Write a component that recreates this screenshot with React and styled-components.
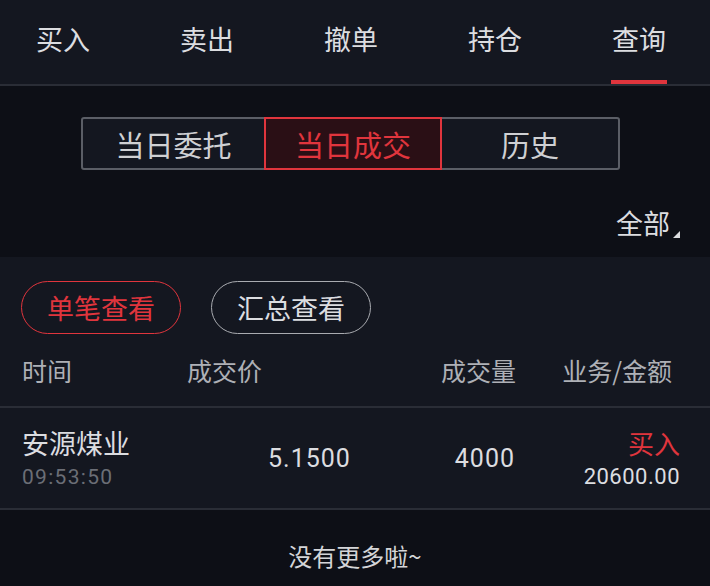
import React, { useState } from 'react';
import styled, { createGlobalStyle } from 'styled-components';

const Color = {
  panel: '#141720',
  deep: '#0d0f16',
  line: '#2a2d36',
  text: '#dcdde0',
  sub: '#aeb0b6',
  muted: '#6b6e76',
  red: '#e0353d',
  redBg: '#2a0f15',
};

const Global = createGlobalStyle`
  html, body {
    margin: 0;
    padding: 0;
    background: ${Color.deep};
  }
  body {
    font-family: "Noto Sans CJK SC", "Noto Sans", sans-serif;
    color: ${Color.text};
  }
`;

const tabs = ['买入', '卖出', '撤单', '持仓', '查询'];
const segments = ['当日委托', '当日成交', '历史'];
const pills = ['单笔查看', '汇总查看'];

export default function App() {
  const [tab, setTab] = useState(4);
  const [seg, setSeg] = useState(1);
  const [pill, setPill] = useState(0);

  return (
    <Page>
      <Global />
      <TabBar>
        {tabs.map((t, i) => (
          <Tab key={t} $active={i === tab} onClick={() => setTab(i)}>
            {t}
          </Tab>
        ))}
      </TabBar>

      <FilterArea>
        <Segmented>
          {segments.map((s, i) => (
            <Segment key={s} $active={i === seg} onClick={() => setSeg(i)}>
              {s}
            </Segment>
          ))}
        </Segmented>
        <AllRow>
          <AllButton>全部</AllButton>
        </AllRow>
      </FilterArea>

      <ListPanel>
        <PillRow>
          {pills.map((p, i) => (
            <Pill key={p} $active={i === pill} onClick={() => setPill(i)}>
              {p}
            </Pill>
          ))}
        </PillRow>
        <HeadRow>
          <HeadCell>时间</HeadCell>
          <HeadCell>成交价</HeadCell>
          <HeadCell $right>成交量</HeadCell>
          <HeadCell $right>业务/金额</HeadCell>
        </HeadRow>
      </ListPanel>

      <DealRow>
        <NameCol>
          <StockName>安源煤业</StockName>
          <Time>09:53:50</Time>
        </NameCol>
        <Num $pad="81px">5.1500</Num>
        <Num $right>4000</Num>
        <AmountCol>
          <Side>买入</Side>
          <Amount>20600.00</Amount>
        </AmountCol>
      </DealRow>

      <NoMore>没有更多啦~</NoMore>
    </Page>
  );
}

const Page = styled.div`
  width: 710px;
  min-height: 586px;
  background: ${Color.deep};
`;

const TabBar = styled.div`
  height: 84px;
  display: flex;
  gap: 90px;
  padding-left: 36px;
  background: ${Color.panel};
  border-bottom: 2px solid ${Color.line};
`;

const Tab = styled.div`
  position: relative;
  width: 54px;
  display: flex;
  justify-content: center;
  padding-top: 20px;
  font-size: 27px;
  line-height: 38px;
  white-space: nowrap;
  color: ${Color.text};
  cursor: pointer;

  &::after {
    content: '';
    display: ${(p) => (p.$active ? 'block' : 'none')};
    position: absolute;
    left: -1px;
    right: -1px;
    bottom: 0;
    height: 4px;
    background: ${Color.red};
  }
`;

const FilterArea = styled.div`
  background: ${Color.deep};
  padding: 31px 0 0;
  height: 140px;
`;

const Segmented = styled.div`
  margin-left: 81px;
  width: 539px;
  height: 53px;
  box-sizing: border-box;
  display: grid;
  grid-template-columns: 181px 178px 1fr;
  border: 2px solid #5b5e66;
  border-radius: 3px;
  background: ${Color.panel};
`;

const Segment = styled.div`
  display: flex;
  align-items: center;
  justify-content: center;
  font-size: 29px;
  margin: -2px 0;
  white-space: nowrap;
  color: ${(p) => (p.$active ? Color.red : '#cfd0d3')};
  background: ${(p) => (p.$active ? Color.redBg : 'transparent')};
  border: 2px solid ${(p) => (p.$active ? Color.red : 'transparent')};
  cursor: pointer;
`;

const AllRow = styled.div`
  display: flex;
  justify-content: flex-end;
  padding: 38px 40px 0 0;
`;

const AllButton = styled.div`
  position: relative;
  font-size: 27px;
  line-height: 30px;
  color: ${Color.text};

  &::after {
    content: '';
    position: absolute;
    right: -10px;
    bottom: 0;
    width: 0;
    height: 0;
    border-left: 7px solid transparent;
    border-bottom: 7px solid ${Color.text};
  }
`;

const ListPanel = styled.div`
  background: ${Color.panel};
  padding: 24px 0 0;
  border-bottom: 2px solid ${Color.line};
`;

const PillRow = styled.div`
  display: flex;
  gap: 30px;
  padding-left: 21px;
`;

const Pill = styled.div`
  width: 160px;
  height: 53px;
  box-sizing: border-box;
  display: flex;
  align-items: center;
  justify-content: center;
  border-radius: 27px;
  font-size: 27px;
  white-space: nowrap;
  border: 1.5px solid ${(p) => (p.$active ? Color.red : '#a9abb0')};
  color: ${(p) => (p.$active ? Color.red : Color.text)};
  cursor: pointer;
`;

const HeadRow = styled.div`
  height: 72px;
  display: grid;
  grid-template-columns: 165px 160px 169px 1fr;
  align-items: center;
  padding: 0 38px 0 22px;
`;

const HeadCell = styled.div`
  font-size: 25px;
  white-space: nowrap;
  color: ${Color.sub};
  text-align: ${(p) => (p.$right ? 'right' : 'left')};
`;

const DealRow = styled.div`
  height: 100px;
  display: grid;
  grid-template-columns: 165px 185px 143px 1fr;
  align-items: center;
  padding: 0 30px 0 22px;
  background: ${Color.panel};
  border-bottom: 2px solid ${Color.line};
`;

const NameCol = styled.div`
  display: flex;
  flex-direction: column;
  gap: 2px;
  margin-top: 2px;
`;

const StockName = styled.div`
  font-size: 27px;
  line-height: 34px;
  white-space: nowrap;
  color: ${Color.text};
`;

const Time = styled.div`
  font-family: Roboto, "Noto Sans", sans-serif;
  font-size: 21px;
  line-height: 30px;
  letter-spacing: 1.3px;
  color: ${Color.muted};
`;

const Num = styled.div`
  font-family: Roboto, "Noto Sans", sans-serif;
  font-size: 25px;
  letter-spacing: 1px;
  color: ${Color.text};
  padding-left: ${(p) => p.$pad || 0};
  text-align: ${(p) => (p.$right ? 'right' : 'left')};
`;

const AmountCol = styled.div`
  display: flex;
  flex-direction: column;
  align-items: flex-end;
  gap: 2px;
  margin-top: 2px;
`;

const Side = styled.div`
  font-size: 26px;
  line-height: 34px;
  color: ${Color.red};
`;

const Amount = styled.div`
  font-family: Roboto, "Noto Sans", sans-serif;
  font-size: 22px;
  line-height: 30px;
  letter-spacing: 0.5px;
  color: ${Color.text};
`;

const NoMore = styled.div`
  height: 76px;
  display: flex;
  align-items: center;
  justify-content: center;
  padding-top: 14px;
  box-sizing: border-box;
  font-size: 24px;
  color: #d4d5d8;
`;
